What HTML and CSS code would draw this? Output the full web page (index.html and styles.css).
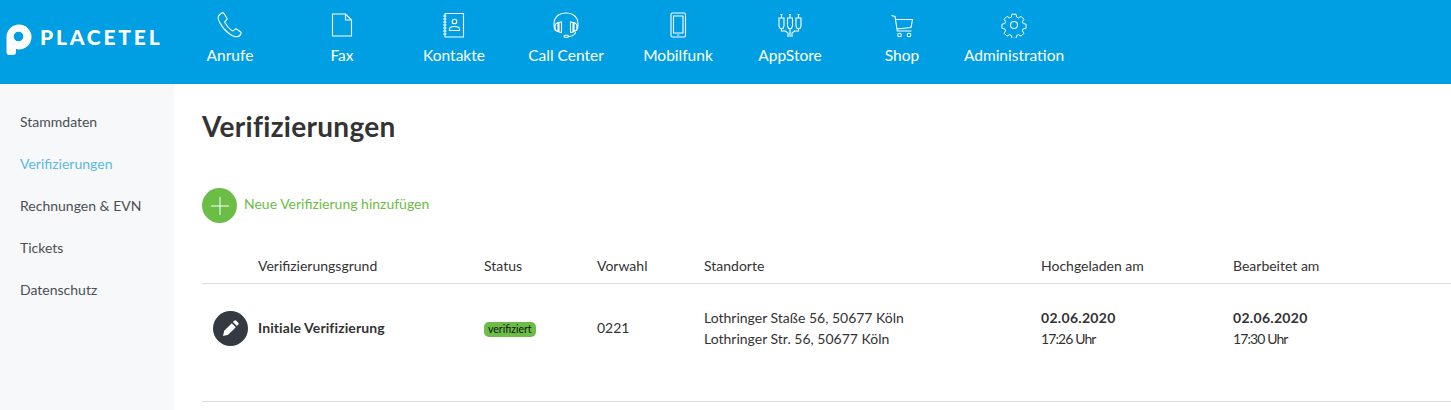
FILE: index.html
```html
<!DOCTYPE html>
<html>
<head lang="en">
    <meta charset="UTF-8">
    <title>Verifizierungen</title>
    <link rel="stylesheet" href="styles.css">
</head>
<body>
<div class="top">
    <a href="#" class="logo">
        <svg width="26" height="31" viewBox="0 0 26 31"><path fill="#fff" fill-rule="evenodd" d="M.5 13A12.500 12.500 0 1 1 13 25.500c-1 0-2-.1-3-.4V28a3 3 0 0 1-3 3H3.500a3 3 0 0 1-3-3z M12.500 7.700a4.800 4.800 0 1 0 0 9.600 4.800 4.800 0 0 0 0-9.600z"/></svg>
        <span>PLACETEL</span>
    </a>
    <ul class="nav">
        <li><a href="#">
            <svg width="26" height="26" viewBox="0 0 26 26"><path d="M4 1.500 1.800 3.500C.6 5 1.300 8 3 11c2 4 5.500 8 9 10.500 3 2.200 6 3.500 8 3.300 1.500-.2 3.500-1.500 4-3.300.2-.8 0-1.300-.6-1.800l-3.600-2.500c-.7-.4-1.300-.4-1.900.1l-1.400 1.300c-.5.400-1 .4-1.600 0-3-2-5.400-4.700-7-8-.3-.6-.2-1.100.3-1.500l1.300-1.100c.6-.5.700-1.200.3-1.900L7.200 1.800C6.400.7 5 .6 4 1.500z"/></svg>
            <span>Anrufe</span></a></li>
        <li><a href="#">
            <svg width="26" height="26" viewBox="0 0 26 26"><path d="M3.500 2h13l6 6v16h-19zM16.500 2v6h6"/></svg>
            <span>Fax</span></a></li>
        <li><a href="#">
            <svg width="26" height="26" viewBox="0 0 26 26"><path d="M4 1.500h18.500v23.500H4zM2 4h3.500M2 7h3.500M2 10h3.500M2 13h3.500M2 16h3.500M2 19h3.500M2 22h3.500"/><circle cx="13.500" cy="9.500" r="2.300"/><path d="M8.500 18.500v-1.500c0-1.500 2-2.500 5-2.500s5 1 5 2.500v1.500z"/></svg>
            <span>Kontakte</span></a></li>
        <li><a href="#">
            <svg width="26" height="26" viewBox="0 0 26 26"><path d="M2.500 19C.5 15.500.5 10 2 7 4 3 8 1 13 1s9 2 11 6c1.500 3 1.500 8.500-.5 12M5 10.500v9c-2-.5-3-2.500-3-4.500s1-4 3-4.500zM8.500 10v10.500L6 20V10.500zM21 10.500v9c2-.5 3-2.500 3-4.500s-1-4-3-4.500zM17.500 10v10.500L20 20V10.500zM22.500 20c-.5 3-3 4.300-7 4.500"/><rect x="11" y="23.300" width="4.500" height="2" rx="1"/></svg>
            <span>Call Center</span></a></li>
        <li><a href="#">
            <svg width="26" height="26" viewBox="0 0 26 26"><rect x="6" y="1" width="14.500" height="24" rx="1.500"/><path d="M8.500 4h9.500v17H8.500zM12.300 23h2"/></svg>
            <span>Mobilfunk</span></a></li>
        <li><a href="#">
            <svg width="26" height="26" viewBox="0 0 26 26"><path d="M2 6h5v8l-1 2.500H3L2 14zM10.500 6h5v8l-1 2.500h-3l-1-2.500zM19 6h5v8l-1 2.500h-3l-1-2.500zM4.500 6V2.500M13 6V2.500M21.500 6V2.500M3.500 2.500h2M12 2.500h2M20.500 2.500h2M4.500 16.500V19h4l2.500 2v4M13 16.500V25M21.500 16.500V19h-4L15 21v4"/></svg>
            <span>AppStore</span></a></li>
        <li><a href="#">
            <svg width="26" height="26" viewBox="0 0 26 26"><path d="M2.500 3.500 6 4.500 8.300 19H22.500M6.500 7.500h17L22 15.500 7.800 17"/><circle cx="10.500" cy="23" r="1.800"/><circle cx="20" cy="23" r="1.800"/></svg>
            <span>Shop</span></a></li>
        <li><a href="#">
            <svg width="26" height="26" viewBox="0 0 26 26"><path d="M10.700 1h4.600l.7 3.200 2 .9 2.800-1.700 3.200 3.200-1.700 2.800.9 2 3.200.7v4.600l-3.200.7-.9 2 1.700 2.800-3.200 3.200-2.800-1.700-2 .9-.7 3.200h-4.600l-.7-3.200-2-.9-2.800 1.700-3.200-3.200 1.700-2.800-.9-2-3.200-.7v-4.600l3.200-.7.900-2-1.700-2.800 3.200-3.200 2.800 1.700 2-.9z" transform="translate(1.300 1.300) scale(.9)"/><circle cx="13" cy="13" r="3.500"/></svg>
            <span>Administration</span></a></li>
    </ul>
</div>
<div class="page">
    <ul class="side">
        <li><a href="#">Stammdaten</a></li>
        <li><a href="#" class="active">Verifizierungen</a></li>
        <li><a href="#">Rechnungen &amp; EVN</a></li>
        <li><a href="#">Tickets</a></li>
        <li><a href="#">Datenschutz</a></li>
    </ul>
    <div class="main">
        <h1>Verifizierungen</h1>
        <a href="#" class="add">
            <span class="add_icon"><svg width="18" height="18" viewBox="0 0 18 18"><path d="M9 0v18M0 9h18"/></svg></span>
            <span class="add_text">Neue Verifizierung hinzufügen</span>
        </a>
        <table class="list">
            <colgroup>
                <col class="c_icon"><col class="c_name"><col class="c_status"><col class="c_code"><col class="c_place"><col class="c_up"><col>
            </colgroup>
            <thead>
                <tr>
                    <th></th>
                    <th>Verifizierungsgrund</th>
                    <th>Status</th>
                    <th>Vorwahl</th>
                    <th>Standorte</th>
                    <th>Hochgeladen am</th>
                    <th>Bearbeitet am</th>
                </tr>
            </thead>
            <tbody>
                <tr>
                    <td><span class="edit"><svg width="16" height="16" viewBox="0 0 16 16"><path fill="#fff" d="M11.200 .8a1.500 1.500 0 0 1 2.100 0l1.900 1.900a1.500 1.500 0 0 1 0 2.100l-1.300 1.300-4-4zM8.800 3.200l4 4-7.600 7.600L0 16l1.200-5.200z"/></svg></span></td>
                    <td class="mid"><b class="name">Initiale Verifizierung</b></td>
                    <td class="mid"><span class="badge">verifiziert</span></td>
                    <td class="mid">0221</td>
                    <td>Lothringer Staße 56, 50677 Köln<br>Lothringer Str. 56, 50677 Köln</td>
                    <td><b class="date">02.06.2020</b><br><span class="time">17:26 Uhr</span></td>
                    <td><b class="date">02.06.2020</b><br><span class="time">17:30 Uhr</span></td>
                </tr>
            </tbody>
        </table>
    </div>
</div>
</body>
</html>
```
FILE: styles.css
```css
*{margin:0;padding:0;box-sizing:border-box;}
ul{list-style:none;}
a{text-decoration:none;color:inherit;}
html,body{height:100%;}
body{font-family:Lato,"Open Sans","Liberation Sans",sans-serif;font-size:14px;color:#333;background:#fff;overflow:hidden;}

.top{display:flex;height:84px;background:#009fe3;color:#fff;}
.logo{display:flex;align-items:flex-start;width:174px;padding:24px 0 0 6px;}
.logo svg{display:block;}
.logo span{margin-left:8px;font-size:21px;line-height:25px;font-weight:900;letter-spacing:2.800px;}
.nav{display:flex;}
.nav li{width:112px;}
.nav a{display:flex;flex-direction:column;align-items:center;padding-top:12px;font-size:15.500px;white-space:nowrap;}
.nav svg{display:block;fill:none;stroke:#fff;stroke-width:1.100;margin-bottom:8px;}

.page{display:flex;height:326px;}
.side{width:174px;flex:none;padding-top:17px;background:#f7f8f9;}
.side li{height:42px;line-height:42px;padding-left:20px;font-size:14px;color:#4a4f54;}
.side .active{color:#5bb8e6;}

.main{flex:1;padding-left:28px;}
h1{margin-top:24px;font-size:28px;line-height:36px;font-weight:700;color:#333;letter-spacing:.3px;}
.add{display:flex;align-items:center;margin-top:44px;font-size:14px;color:#6cbd45;}
.add_icon{display:flex;align-items:center;justify-content:center;width:35px;height:35px;margin-right:7px;border-radius:50%;background:#6cbd45;}
.add_icon svg{stroke:#fff;stroke-width:1;}
.add_text{margin-top:-5px;}

.list{width:100%;margin-top:26px;border-collapse:collapse;table-layout:fixed;}
.c_icon{width:56px;}
.c_name{width:226px;}
.c_status{width:113px;}
.c_code{width:107px;}
.c_place{width:337px;}
.c_up{width:192px;}
.list th{height:34px;text-align:left;font-weight:400;border-bottom:1px solid #ddd;}
.list td{height:118px;padding-top:23px;line-height:21px;border-bottom:1px solid #ddd;vertical-align:top;}
.list td.mid{padding-top:33px;}
.edit{display:flex;align-items:center;justify-content:center;width:35px;height:35px;margin:4px 0 0 11px;border-radius:50%;background:#343a42;}
.name{color:#333;letter-spacing:.1px;}
.date{letter-spacing:.3px;}
.time{letter-spacing:-.9px;}
.badge{display:inline-block;height:15px;line-height:15px;padding:0 4px;border-radius:5px;background:#6cbd45;font-size:10.500px;color:#111;vertical-align:top;margin-top:5px;}
```
